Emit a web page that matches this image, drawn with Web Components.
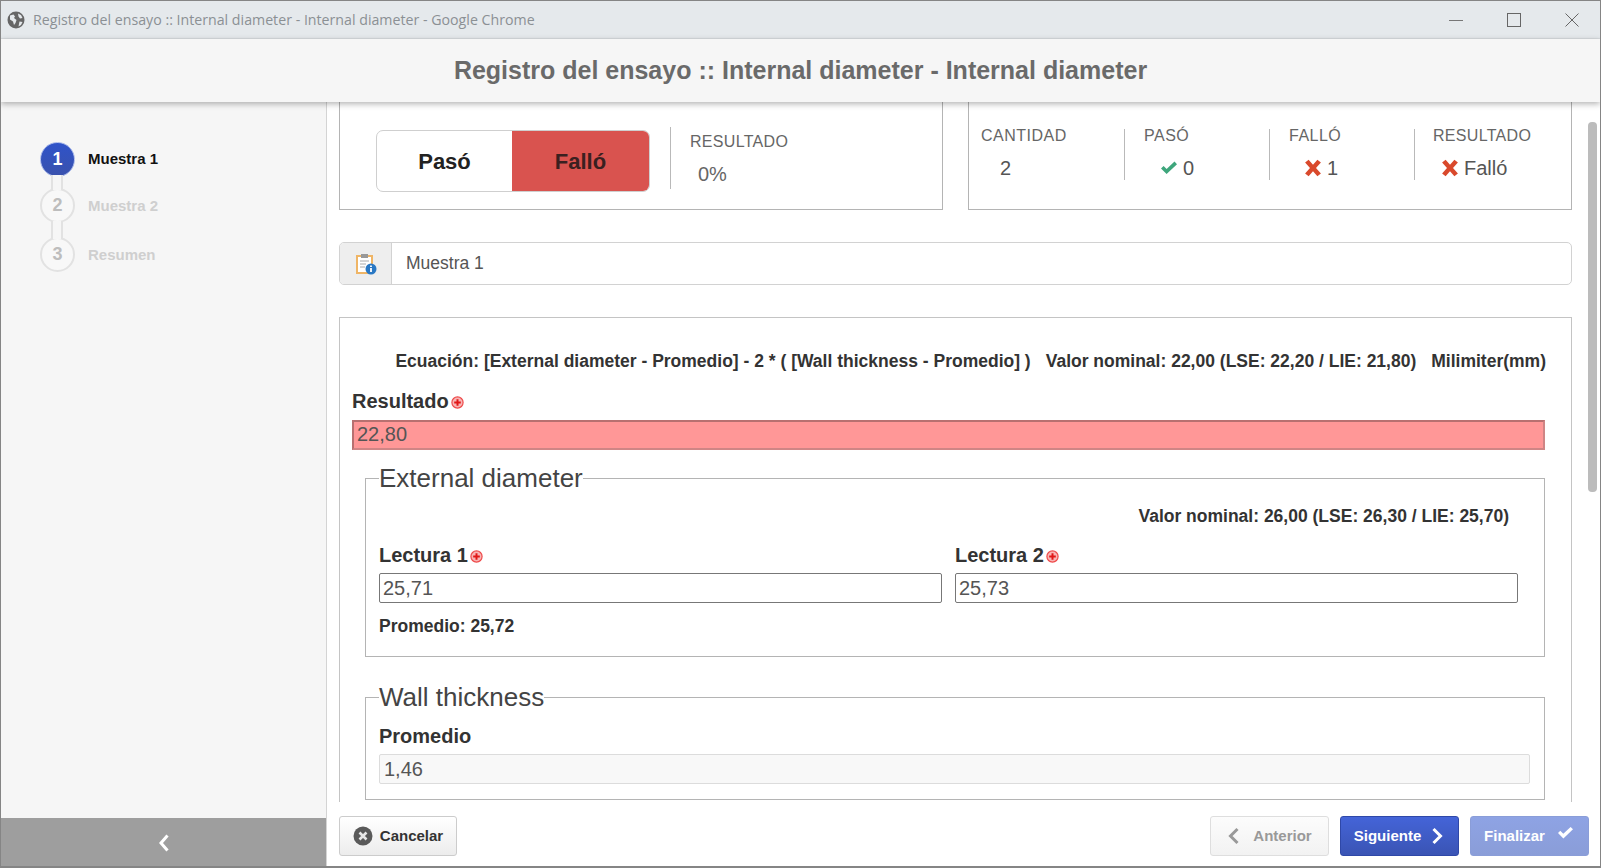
<!DOCTYPE html>
<html lang="es"><head><meta charset="utf-8"><title>Registro del ensayo</title>
<style>
html,body{margin:0;height:100%;overflow:hidden;background:#fff}
body{font-family:"Liberation Sans",Arial,sans-serif}
</style></head>
<body>
<test-window>
  <win-titlebar slot="bar" text="Registro del ensayo :: Internal diameter - Internal diameter - Google Chrome"></win-titlebar>
  <app-header slot="bar">Registro del ensayo :: Internal diameter - Internal diameter</app-header>
  <step-nav slot="side">
    <step-item num="1" active>Muestra 1</step-item>
    <step-rail h="13"></step-rail>
    <step-item num="2">Muestra 2</step-item>
    <step-rail h="16"></step-rail>
    <step-item num="3">Resumen</step-item>
  </step-nav>
  <summary-row slot="main"></summary-row>
  <sample-title slot="main">Muestra 1</sample-title>
  <form-panel slot="main">
    <equation-line>
      <span>Ecuación: [External diameter - Promedio] - 2 * ( [Wall thickness - Promedio] )</span>
      <span>Valor nominal: 22,00 (LSE: 22,20 / LIE: 21,80)</span>
      <span>Milimiter(mm)</span>
    </equation-line>
    <read-field label="Resultado" value="22,80" required kind="bad"></read-field>
    <field-group legend="External diameter">
      <nominal-line>Valor nominal: 26,00 (LSE: 26,30 / LIE: 25,70)</nominal-line>
      <two-cols>
        <read-field label="Lectura 1" value="25,71" required></read-field>
        <read-field label="Lectura 2" value="25,73" required></read-field>
      </two-cols>
      <nominal-line left>Promedio: 25,72</nominal-line>
    </field-group>
    <field-group legend="Wall thickness" compact>
      <read-field label="Promedio" value="1,46" kind="off"></read-field>
    </field-group>
  </form-panel>
  <foot-button slot="foot-left" kind="plain" icon="cancel">Cancelar</foot-button>
  <foot-button slot="foot-right" kind="ghost" icon="prev">Anterior</foot-button>
  <foot-button slot="foot-right" kind="primary" icon="next">Siguiente</foot-button>
  <foot-button slot="foot-right" kind="faded" icon="check">Finalizar</foot-button>
</test-window>
<script>
const def=(name,render)=>customElements.define(name,class extends HTMLElement{
  connectedCallback(){ if(!this.shadowRoot){this.attachShadow({mode:'open'}).innerHTML=render(this);} }
});
const ICON={
 check:c=>`<svg width="18" height="16" viewBox="0 0 18 16"><path d="M1 8.5l2.6-2.6 3 3L14.5 1.5 17 4.2 6.6 14z" fill="${c}"/></svg>`,
 cross:(c,s=18)=>`<svg width="${s}" height="${s}" viewBox="0 0 18 18"><path d="M4.6 .8L9 5.8 13.4.8l3.5 2.6L12 9l4.9 5.6-3.5 2.6L9 12.2l-4.4 5-3.5-2.6L6 9 1.1 3.4z" fill="${c}"/></svg>`,
 req:()=>`<svg width="13" height="13" viewBox="0 0 13 13"><circle cx="6.5" cy="6.5" r="5.6" fill="#f8b4b4" stroke="#ee4a4a" stroke-width="1.2"/><path d="M6.5 3.2v6.6M3.2 6.5h6.6" stroke="#e01818" stroke-width="2"/></svg>`
};
def('test-window',()=>`<style>
:host{display:flex;flex-direction:column;width:1601px;height:868px;box-sizing:border-box;border:1px solid #858585;border-bottom-width:2px;border-top-width:1px;background:#fff;overflow:hidden;color:#333}
.body{flex:1;display:flex;min-height:0}
.side{width:326px;flex:none;box-sizing:border-box;background:#f6f6f6;border-right:1px solid #d4d4d4;display:flex;flex-direction:column}
.side-top{flex:1;min-height:0}
.collapse{height:48px;padding-top:2px;box-sizing:border-box;background:#9e9e9e;display:flex;align-items:center;justify-content:center;flex:none}
.right{flex:1;min-width:0;display:flex;flex-direction:column}
.upper{flex:1;min-height:0;display:flex}
.scroll{flex:1;min-width:0;overflow:hidden;padding:0 12px 0 12px}
.track{width:16px;flex:none;padding:20px 3px 0 4px;box-sizing:border-box}
.thumb{height:370px;background:#bcbcbc;border-radius:4px}
.foot{height:64px;flex:none;box-sizing:border-box;padding:14px 11px 0 12px;display:flex;justify-content:space-between}
.foot div{display:flex;gap:11px}
.bar{position:relative;z-index:2}
</style>
<div class="bar"><slot name="bar"></slot></div>
<div class="body">
 <div class="side"><div class="side-top"><slot name="side"></slot></div>
  <div class="collapse"><svg width="14" height="20" viewBox="0 0 14 20"><path d="M10.5 2.5L4 10l6.5 7.5" fill="none" stroke="#fff" stroke-width="3"/></svg></div></div>
 <div class="right">
  <div class="upper"><div class="scroll"><slot name="main"></slot></div><div class="track"><div class="thumb"></div></div></div>
  <div class="foot"><div><slot name="foot-left"></slot></div><div><slot name="foot-right"></slot></div></div>
 </div>
</div>`);
def('win-titlebar',h=>`<style>
:host{display:flex;align-items:center;height:37px;background:#e5e9ec;border-bottom:1px solid #d8dcdf;box-sizing:content-box;font:14.2px "Open Sans","Noto Sans",sans-serif;color:#8b9094;padding:0 0 0 6px}
.t{margin-left:8px;flex:1;white-space:nowrap}
.b{display:flex;align-items:center;gap:0;margin-right:-1px}
.b span{width:58px;display:flex;justify-content:center}
</style>
<svg width="18" height="18" viewBox="0 0 18 18"><circle cx="9" cy="9" r="8.5" fill="#666"/><path d="M3 4.5l3.5-1 1.5 2-1 1.5 2.5 2-1 3-1.5 2-1-3.5L3 8.5zM11 2.5l3 1.5 1.5 3-2.5.5-1.5-2zM12.5 10.5l3 .5-1.5 3-2.5 1.5z" fill="#e5e9ec"/></svg>
<span class="t">${h.getAttribute('text')}</span>
<div class="b">
<span><svg width="14" height="14" viewBox="0 0 14 14"><path d="M0 7.5h14" stroke="#777" stroke-width="1"/></svg></span>
<span><svg width="14" height="14" viewBox="0 0 14 14"><rect x=".5" y=".5" width="13" height="13" fill="none" stroke="#666"/></svg></span>
<span><svg width="14" height="14" viewBox="0 0 14 14"><path d="M.5.5l13 13M13.5.5l-13 13" stroke="#666"/></svg></span>
</div>`);
def('app-header',()=>`<style>
:host{display:flex;align-items:center;justify-content:center;height:63px;background:#f6f6f6;box-shadow:0 2px 6px rgba(0,0,0,.3);font:bold 25px "Liberation Sans",sans-serif;color:#6a6a6a;white-space:nowrap}
</style><slot></slot>`);
def('step-nav',()=>`<style>:host{display:block;padding:40px 0 0 39px}</style><slot></slot>`);
def('step-item',h=>{const a=h.hasAttribute('active');return `<style>
:host{display:flex;align-items:center;height:35px;gap:13px;font:bold 15px "Liberation Sans",sans-serif;color:${a?'#111':'#cfcfcf'}}
span{padding-bottom:${a?2:0}px}
.c{width:35px;height:35px;box-sizing:border-box;border-radius:50%;display:flex;align-items:center;justify-content:center;font-size:18px;
 ${a?'background:linear-gradient(#2f53c9,#3a52ad);border:1px solid #a9b9ea;color:#fff':'background:#f8f8f8;border:2px solid #e2e2e2;color:#bdbdbd'}}
</style><div class="c">${h.getAttribute('num')}</div><span><slot></slot></span>`});
def('step-rail',h=>`<style>
:host{display:block;position:relative;z-index:1;width:12px;height:${+h.getAttribute('h')+2}px;margin:-2px 0 -2px 11px;box-sizing:border-box;border:solid #e2e2e2;border-width:0 2px;background:#f6f6f6}
</style>`);
def('summary-row',()=>`<style>
:host{display:flex;justify-content:space-between;height:108px}
.box{box-sizing:border-box;width:604px;border:1px solid #b4b4b4;border-top:0;display:flex}
.l{padding:28px 0 0 36px}
.tog{width:274px;height:62px;box-sizing:border-box;border:1px solid #cfcfcf;border-radius:7px;display:flex;overflow:hidden;font:bold 22px "Liberation Sans",sans-serif;color:#222}
.tog span{flex:1;display:flex;align-items:center;justify-content:center;padding-top:2px}
.tog span:first-child{flex:0 0 135px}
.tog .on{background:#d9534f;color:#3a2020}
.res{margin:-3px 0 0 20px;height:62px;border-left:1px solid #b9b9b9;padding-left:19px;color:#666}
.lab{font-size:16px;letter-spacing:.5px;line-height:14px}
.res .lab{margin-top:8px;letter-spacing:.3px}
.res .v{font-size:20px;line-height:24px;margin:13px 0 0 8px}
.r{padding:27px 0 0 0;gap:0;align-items:flex-start}
.cell{height:51px;box-sizing:border-box;border-left:1px solid #b9b9b9;padding-left:19px;width:145px;flex:none;color:#666}
.cell:first-child{border-left:0;padding-left:12px;width:155px}
.cell .v{font-size:20px;line-height:24px;margin-top:13px;padding-left:16px;display:flex;align-items:center;gap:5px;color:#555}
.cell:first-child .v{padding-left:19px}
.cell:nth-child(3) .v{padding-left:15px}
.cell:last-child{padding-left:18px}
.cell:last-child .lab{letter-spacing:.3px}
.cell:last-child .v{padding-left:8px;gap:5px}
</style>
<div class="box l"><div class="tog"><span>Pasó</span><span class="on">Falló</span></div>
 <div class="res"><div class="lab">RESULTADO</div><div class="v">0%</div></div></div>
<div class="box r">
 <div class="cell"><div class="lab">CANTIDAD</div><div class="v">2</div></div>
 <div class="cell"><div class="lab">PASÓ</div><div class="v">${ICON.check('#3ea67c')}0</div></div>
 <div class="cell"><div class="lab">FALLÓ</div><div class="v">${ICON.cross('#d9492c')}1</div></div>
 <div class="cell"><div class="lab">RESULTADO</div><div class="v">${ICON.cross('#d9492c')}Falló</div></div>
</div>`);
def('sample-title',()=>`<style>
:host{display:flex;height:43px;margin-top:32px;box-sizing:border-box;border:1px solid #d2d2d2;border-radius:5px;font-size:17.5px;color:#555;overflow:hidden}
.a{width:51px;background:#eee;border-right:1px solid #d2d2d2;display:flex;align-items:center;justify-content:center}
.t{padding-left:14px;display:flex;align-items:center}
</style>
<div class="a"><svg width="22" height="22" viewBox="0 0 22 22"><rect x="2" y="3" width="15" height="17" fill="#fff" stroke="#efb566" stroke-width="2"/><rect x="6" y="1" width="7" height="4" fill="#999"/><path d="M5 8h9M5 11h6M5 14h5" stroke="#aaa"/><circle cx="16" cy="16" r="5.5" fill="#2a78c4"/><path d="M16 15v4M16 12.5v1.5" stroke="#fff" stroke-width="1.8"/></svg></div>
<div class="t"><slot></slot></div>`);
def('form-panel',()=>`<style>
:host{display:block;margin-top:32px;box-sizing:border-box;border:1px solid #c4c4c4;padding:33px 26px 40px 12px;height:700px}
</style><slot></slot>`);
def('equation-line',()=>`<style>
:host{display:flex;justify-content:flex-end;gap:15px;font:bold 17.5px/20px "Liberation Sans",sans-serif;color:#333;white-space:nowrap;margin-bottom:18px;margin-right:-1px}
</style><slot></slot>`);
def('nominal-line',h=>`<style>
:host{display:block;font:bold 17.5px/20px "Liberation Sans",sans-serif;color:#333;text-align:${h.hasAttribute('left')?'left':'right'};${h.hasAttribute('left')?'margin:13px 0 1px':'padding-right:21px;margin:13px 0 17px'}}
</style><slot></slot>`);
def('read-field',h=>{const k=h.getAttribute('kind');const st=k==='bad'?'background:#ff9797;border:2px solid #cf8585;border-top-color:#b87070;border-left-color:#b87070;padding-bottom:2px':k==='off'?'background:#f8f8f8;border:1px solid #dcdcdc;border-radius:2px;padding-left:4px':'background:#fff;border:1px solid #777;border-radius:2px;padding-left:3px';
return `<style>
:host{display:block;min-width:0}
.l{font:bold 20px/24px "Liberation Sans",sans-serif;color:#333;display:flex;align-items:center;gap:2px;margin-bottom:${k==='bad'?7:6}px}
.l svg{margin-top:3px}
.i{height:30px;box-sizing:border-box;padding-left:3px;${st};font:20px/1 "Liberation Sans",sans-serif;color:#555;display:flex;align-items:center}
</style><div class="l">${h.getAttribute('label')}${h.hasAttribute('required')?ICON.req():''}</div><div class="i">${h.getAttribute('value')}</div>`});
def('two-cols',()=>`<style>:host{display:grid;grid-template-columns:563px 563px;gap:13px}</style><slot></slot>`);
def('field-group',h=>{const c=h.hasAttribute('compact');return `<style>
:host{display:block;margin:${c?25:13}px 0 0 13px}
fieldset{margin:0;border:1px solid #b4b4b4;padding:${c?'12px':'0'} 14px ${c?'15px':'19px'} 13px;min-width:0;box-sizing:border-box}
legend{padding:0;font:26px/30px "Liberation Sans",sans-serif;color:#444}
</style><fieldset><legend>${h.getAttribute('legend')}</legend><slot></slot></fieldset>`});
def('foot-button',h=>{
 const k=h.getAttribute('kind'),ic=h.getAttribute('icon');
 const s={plain:'background:linear-gradient(#fff,#ececec);border-color:#ccc;color:#333',ghost:'background:linear-gradient(#fcfcfc,#f2f2f2);border-color:#dedede;color:#999',primary:'background:linear-gradient(#4464d8,#3a54b4);border-color:#2f48a8;color:#fff',faded:'background:linear-gradient(#8ea3e4,#8a9dd8);border-color:#8a9dd8;color:#fff'}[k];
 const chev=(d,c)=>`<svg width="14" height="18" viewBox="0 0 14 18"><path d="${d}" fill="none" stroke="${c}" stroke-width="3"/></svg>`;
 const icons={
  cancel:`<svg width="20" height="20" viewBox="0 0 20 20"><circle cx="10" cy="10" r="9.5" fill="#5a5a5a"/><path d="M6.5 6.5l7 7M13.5 6.5l-7 7" stroke="#e8e8e8" stroke-width="2.6"/></svg>`,
  prev:chev('M10.5 2L3.5 9l7 7','#999'),
  next:chev('M3.5 2l7 7-7 7','#fff'),
  check:`<svg width="17" height="14" viewBox="0 0 17 14" style="margin-top:-7px"><path d="M1 7l2.3-2.3 3 3L13.6 1 16 3.2 6.4 12.6z" fill="#fff"/></svg>`
 }[ic];
 const before=ic==='cancel'||ic==='prev';
 const w=ic==='cancel'?118:119;
 return `<style>
:host{display:block;width:${w}px;height:40px}
span{padding-bottom:1px;${ic==='next'||ic==='check'?'margin-left:-1px':''}}
.b{box-sizing:border-box;width:100%;height:100%;border:1px solid;border-radius:3px;${s};font:bold 15px "Liberation Sans",sans-serif;display:flex;align-items:center;justify-content:center;gap:${ic==='cancel'?7:ic==='prev'?12:ic==='next'?9:12}px}
</style><div class="b">${before?icons:''}<span><slot></slot></span>${before?'':icons}</div>`});
</script>
</body></html>
